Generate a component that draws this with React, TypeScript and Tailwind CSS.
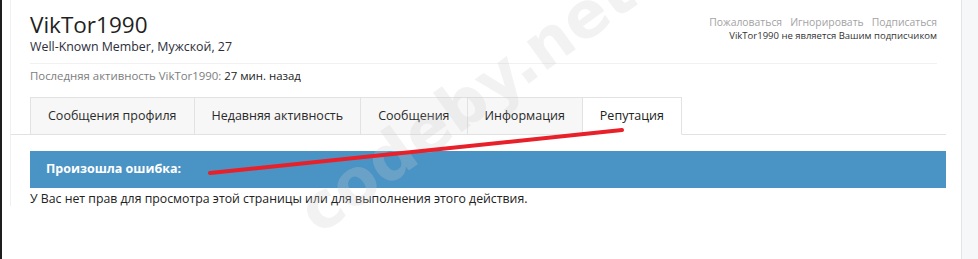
import React from "react";

const TABS = [
  { label: "Сообщения профиля", active: false },
  { label: "Недавняя активность", active: false },
  { label: "Сообщения", active: false },
  { label: "Информация", active: false },
  { label: "Репутация", active: true },
];

const FONT = { fontFamily: '"Open Sans", "DejaVu Sans", sans-serif' };

export default function App() {
  return (
    <div className="relative flex h-[259px] w-[978px] overflow-hidden bg-white text-[#222]" style={FONT}>
      {/* left window edge */}
      <div className="w-[2px] shrink-0 bg-[#1e1e1e]" />
      <div className="w-[8px] shrink-0" />

      {/* main panel */}
      <div className="h-[206px] w-[951px] shrink-0 border-l border-[#f0f0f0]">
        <div className="pl-[19px] pr-[24px] pt-[10px]">
          <div className="flex items-start justify-between border-b border-[#f1f1f1] pb-[8px]">
            <div>
              <h1 className="text-[22.5px] leading-[29px] text-[#1f1f1f]">VikTor1990</h1>
              <div className="text-[12.4px] leading-[16px] text-[#2d2d3a]">Well-Known Member, Мужской, 27</div>
            </div>
            <div className="pt-[5px] text-right">
              <div className="flex justify-end gap-[8px] text-[10.4px] leading-[14px] text-[#a3a3a3]">
                <span>Пожаловаться</span>
                <span>Игнорировать</span>
                <span>Подписаться</span>
              </div>
              <div className="text-[9.5px] leading-[13px] text-[#333]">VikTor1990 не является Вашим подписчиком</div>
            </div>
          </div>
          <div className="pt-[5px] text-[11.4px] leading-[14px] text-[#7d7d7d]">
            Последняя активность VikTor1990: <span className="text-[#222]">27 мин. назад</span>
          </div>
        </div>

        {/* tabs */}
        <div className="mr-[15px] mt-[14px] flex border-b border-[#e2e2e2] pl-[19px]">
          {TABS.map((tab) => (
            <div
              key={tab.label}
              className={`-mb-px -mr-px flex h-[38px] items-center border border-[#e2e2e2] px-[17px] text-[12.5px] font-medium ${
                tab.active ? "border-b-white bg-white text-[#222]" : "bg-[#f7f7f7] text-[#2a2a2a]"
              }`}
            >
              {tab.label}
            </div>
          ))}
        </div>

        {/* error */}
        <div className="ml-[19px] mr-[15px] mt-[16px] flex h-[37px] items-center bg-[#4a93c5] px-[16px] text-[12.5px] font-bold text-white">
          Произошла ошибка:
        </div>
        <div className="pl-[19px] pt-[2px] text-[12.3px] leading-[18px] text-[#222]">
          У Вас нет прав для просмотра этой страницы или для выполнения этого действия.
        </div>
      </div>

      {/* right sidebar edge */}
      <div className="flex-1 border-l border-[#e4e4e4] bg-[#f6f7f9]" />

      {/* watermark */}
      <div
        className="pointer-events-none absolute left-[306px] top-[186px] origin-left whitespace-nowrap text-[64px] font-bold leading-[64px] text-[rgba(204,204,204,0.25)]"
        style={{ transform: "rotate(-36deg)", fontFamily: '"DejaVu Sans", sans-serif' }}
      >
        codeby.net
      </div>

      {/* red stroke */}
      <svg className="pointer-events-none absolute left-0 top-0" width="978" height="259">
        <line x1="210" y1="173" x2="622" y2="130" stroke="#e8202a" strokeWidth="4" strokeLinecap="round" />
      </svg>
    </div>
  );
}
